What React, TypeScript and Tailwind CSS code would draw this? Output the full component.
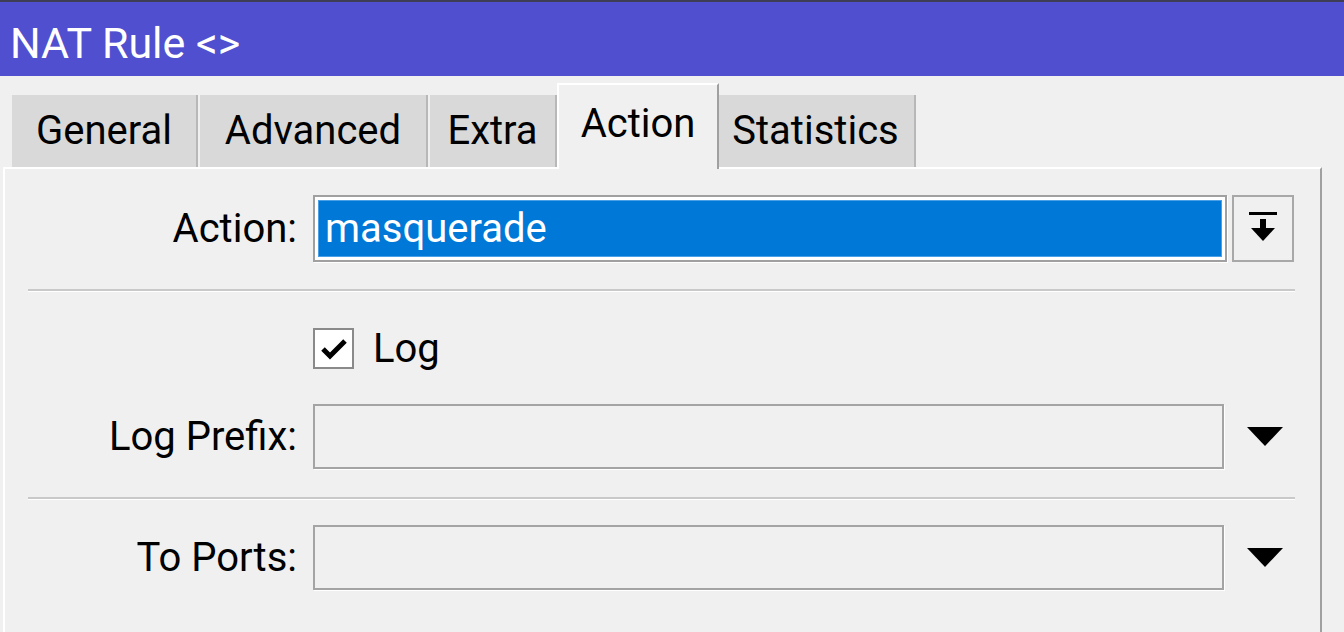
const font = { fontFamily: 'Roboto, "Liberation Sans", sans-serif' };

function Tab({ label, width, active }: { label: string; width: string; active?: boolean }) {
    if (active) {
        return (
            <div
                className={`${width} h-[86px] -mb-[2px] relative z-10 flex justify-center pt-[15px] bg-[#f0f0f0] border-t-2 border-l-2 border-white border-r-2 border-r-[#a0a0a0] text-[40px] leading-[48px] text-black`}
            >
                {label}
            </div>
        );
    }
    return (
        <div
            className={`${width} h-[72px] mr-[2px] flex items-center justify-center bg-[#d9d9d9] border-r-2 border-[#b8b8b8] text-[40px] leading-none text-black`}
        >
            {label}
        </div>
    );
}

function Triangle() {
    return (
        <svg width="38" height="21" viewBox="0 0 38 21">
            <path d="M1 1 H37 L19 20 Z" fill="#000" />
        </svg>
    );
}

function Label({ children }: { children: string }) {
    return (
        <div className="w-[292px] shrink-0 text-right text-[40px] leading-none text-black">
            {children}
        </div>
    );
}

function Separator() {
    return <div className="ml-[23px] w-[1267px] h-[2px] bg-[#c9c9c9] border-b border-white box-content" />;
}

function DropField({ label }: { label: string }) {
    return (
        <div className="flex items-center">
            <Label>{label}</Label>
            <div className="ml-[16px] w-[911px] h-[65px] border-2 border-[#a4a4a4] bg-[#f0f0f0] shadow-[1px_1px_0_#ffffff]" />
            <div className="ml-[22px] flex items-center">
                <Triangle />
            </div>
        </div>
    );
}

export default function App() {
    return (
        <div className="w-[1344px] h-[632px] overflow-hidden bg-[#f0f0f0] flex flex-col" style={font}>
            <div className="h-[76px] shrink-0 border-t-2 border-[#3d3d55] bg-[#4f4fcf] flex items-center pl-[10px] pt-[8px] text-white text-[43px] leading-none">
                NAT Rule &lt;&gt;
            </div>

            <div className="h-[91px] shrink-0 flex items-end pl-[12px]">
                <Tab label="General" width="w-[186px]" />
                <Tab label="Advanced" width="w-[228px]" />
                <Tab label="Extra" width="w-[127px]" />
                <div className="-ml-[2px]">
                    <Tab label="Action" width="w-[162px]" active />
                </div>
                <div className="-ml-[2px]">
                    <Tab label="Statistics" width="w-[199px]" />
                </div>
            </div>

            <div className="ml-[3px] w-[1319px] flex-1 border-t-2 border-l-2 border-white border-r-2 border-r-[#a0a0a0] pt-[26px]">
                <div className="flex items-center">
                    <Label>Action:</Label>
                    <div className="ml-[16px] w-[914px] h-[67px] border-2 border-[#a0a0a0] bg-white p-[3px] shadow-[1px_1px_0_#ffffff]">
                        <div className="h-full bg-[#0078d7] border border-[#4aa0e6] flex items-center pl-[6px] text-white text-[40px] leading-none">
                            masquerade
                        </div>
                    </div>
                    <div className="ml-[5px] w-[62px] h-[67px] border-2 border-[#a8a8a8] bg-[#f0f0f0] flex items-center justify-center">
                        <svg width="30" height="34" viewBox="0 0 30 34">
                            <rect x="1" y="0" width="28" height="3" fill="#000" />
                            <rect x="12" y="7" width="6" height="11" fill="#000" />
                            <path d="M3 16 H27 L15 29 Z" fill="#000" />
                        </svg>
                    </div>
                </div>

                <div className="mt-[27px]">
                    <Separator />
                </div>

                <div className="mt-[36px] flex items-center">
                    <div className="ml-[308px] w-[41px] h-[41px] border-2 border-[#8a8a8a] bg-white flex items-center justify-center">
                        <svg width="28" height="24" viewBox="0 0 28 24">
                            <path d="M3 12 L10 19 L25 4" fill="none" stroke="#000" strokeWidth="5" strokeLinejoin="miter" />
                        </svg>
                    </div>
                    <span className="ml-[19px] text-[40px] leading-none text-black">Log</span>
                </div>

                <div className="mt-[35px]">
                    <DropField label="Log Prefix:" />
                </div>

                <div className="mt-[28px]">
                    <Separator />
                </div>

                <div className="mt-[25px]">
                    <DropField label="To Ports:" />
                </div>
            </div>
        </div>
    );
}
